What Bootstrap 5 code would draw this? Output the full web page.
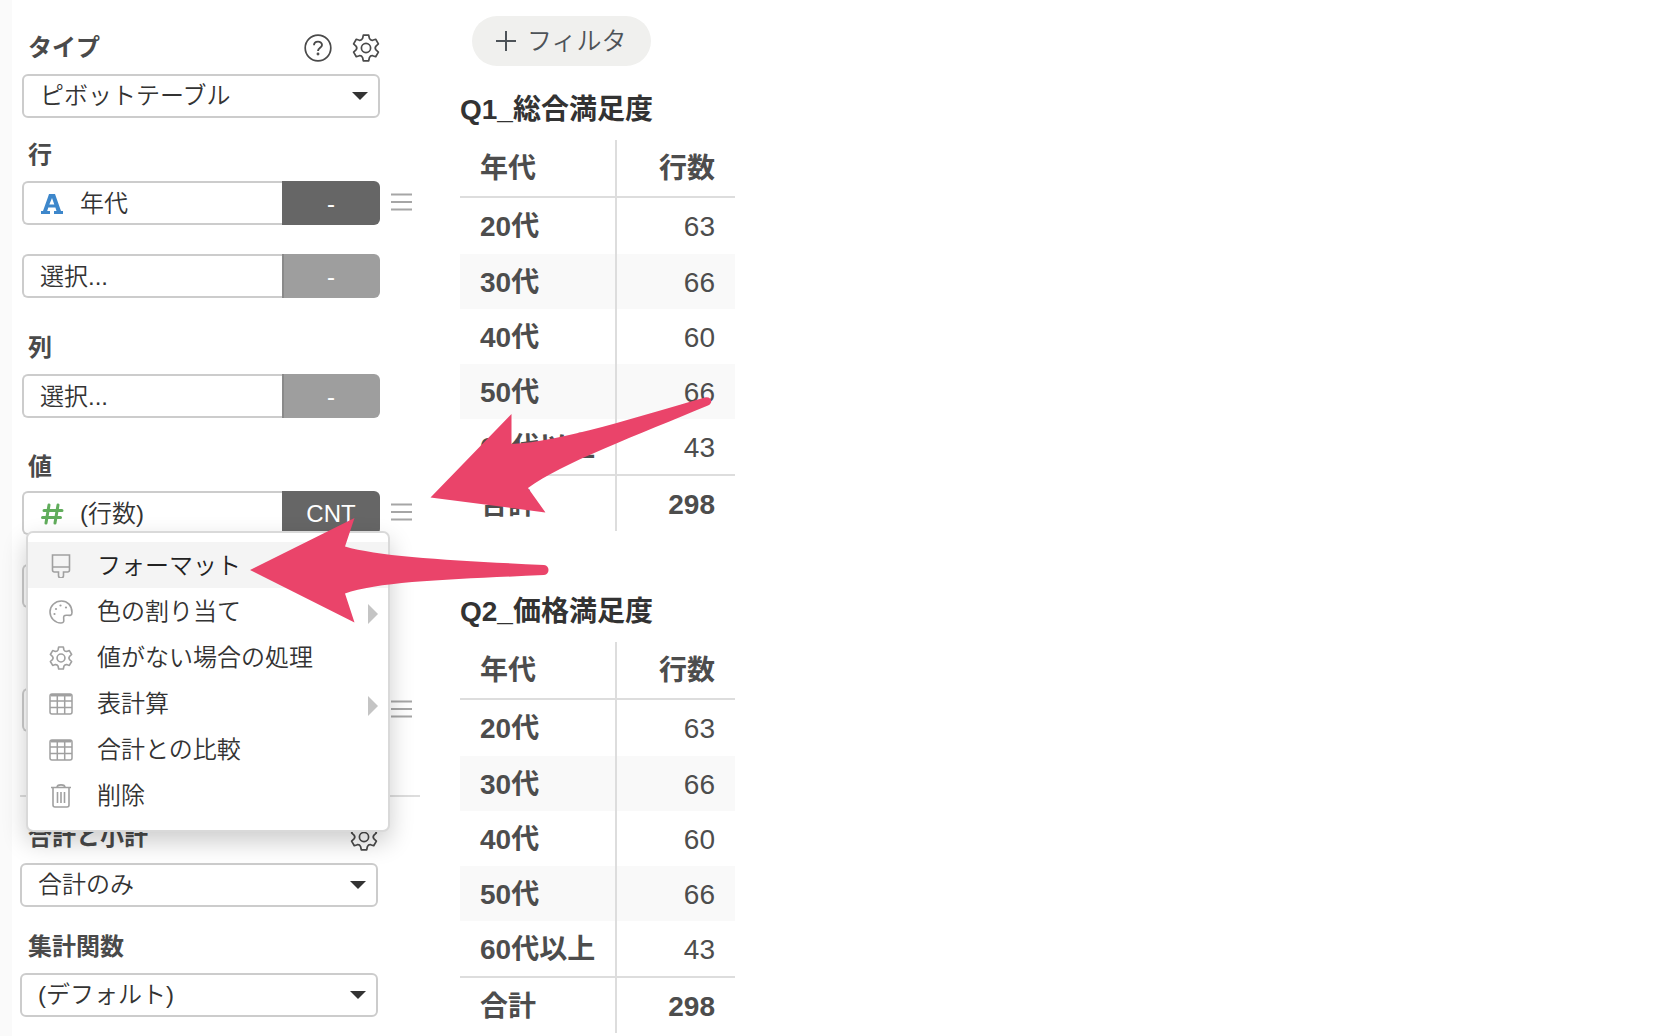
<!DOCTYPE html>
<html lang="ja">
<head>
<meta charset="utf-8">
<meta name="viewport" content="width=device-width, initial-scale=1">
<title>ピボットテーブル</title>
<link rel="stylesheet" href="https://cdn.jsdelivr.net/npm/bootstrap@5.3.0/dist/css/bootstrap.min.css">
<style>
body{font-family:"Liberation Sans","Noto Sans CJK JP",sans-serif;font-size:24px;line-height:36px;font-weight:350;color:#333;background:#fff;overflow-x:hidden}
.edge-strip{width:12px;background:#fafafa}
.side-panel{width:408px;padding:20px 0 16px 10px}
.upper-group{padding-right:40px}
.lower-group{margin-left:-2px;padding-right:42px}
.panel-head{height:54px;padding:1px 0 0 6px;color:#4a4a4a}
.lower-group .panel-head{padding-left:8px}
.head-low{height:50px;padding-top:2px}
.panel-head label,.panel-head h2{font-size:24px;line-height:36px;font-weight:700;margin:0}
.icon-btn{width:28px;height:28px;padding:0;border:0;background:none;color:#4a4a4a;display:flex}
.icon-btn+.icon-btn{margin-left:20px}
.pick{height:44px;border:2px solid #ccc;border-radius:6px;padding:0 16px;font-size:24px;line-height:38px;font-weight:350;color:#333;
 background-image:url("data:image/svg+xml,%3Csvg xmlns='http://www.w3.org/2000/svg' viewBox='0 0 16 8'%3E%3Cpath fill='%23333' d='M0 0h16L8 8z'/%3E%3C/svg%3E");background-size:16px 8px;background-position:right 10px center}
.field-row{height:44px}
.field-name{flex:1 1 0;min-width:0;border:2px solid #ccc;border-right:0;border-radius:6px 0 0 6px;background:#fff;padding:1px 16px 0;text-align:left;font-weight:350;color:#333;line-height:36px;display:flex;align-items:center}
.field-agg{width:98px;border:0;border-radius:0 6px 6px 0;background:#666;color:#fff;font-weight:350;padding:1px 0 0;line-height:36px}
.field-agg.idle{background:#9e9e9e;box-shadow:inset 2px 0 0 #8a8a8a}
.grip{position:absolute;left:100%;top:8px;margin-left:11px}
.type-mark{width:24px;height:24px;margin-right:16px}
.gap-row{margin-top:29px}
.far-row{margin-top:80px}
.head-rows{margin-top:9px}
.head-cols{margin-top:22px}
.head-low{margin-top:23px}
.head-func{margin-top:12px}
.ctx-menu{position:absolute;z-index:5;top:40px;left:4px;width:364px;min-height:301px;margin:0;padding:9px 0;list-style:none;background:#fff;border:2px solid #d9d9d9;border-radius:7px;box-shadow:0 10px 24px rgba(0,0,0,.2)}
.ctx-menu button{width:100%;height:46px;border:0;background:none;padding:1px 10px 0 21px;display:flex;align-items:center;gap:24px;text-align:left;font-weight:350;color:#333}
.ctx-menu button.hot{background:#f4f4f4;color:#222}
.ctx-menu svg{flex:none}
.ctx-menu .sub-arrow{margin-left:auto;margin-top:4px}
.sep{height:2px;background:#ddd;margin:63px 0 12px -2px}
.board{padding:16px 0 0 40px}
.filter-btn{height:50px;border:0;border-radius:25px;background:#f0f0ee;color:#4d5358;padding:0 24px;margin-left:12px;font-size:25px;font-weight:350;display:flex;align-items:center;gap:11px}
.pivot-title{font-size:28px;line-height:36px;font-weight:700;color:#333;height:62px;padding-top:14px;margin:0}
.first-title{margin-top:12px}
.pivot{width:275px;font-size:28px;line-height:36px;color:#4d4d4d;border-collapse:separate;border-spacing:0;white-space:nowrap}
.pivot th,.pivot td{height:55px;padding:2px 20px 0;vertical-align:middle}
.pivot th,.pivot tfoot td{font-weight:700}
.pivot td,.pivot thead th:last-child{text-align:right}
.pivot tr>:first-child{border-right:2px solid #ddd;width:157px}
.pivot tbody th{padding-right:0}
.pivot thead th{height:58px;border-bottom:2px solid #ddd}
.pivot tbody tr:first-child>*{height:56px}
.pivot tbody tr:nth-child(even)>*{background:#f9f9f9}
.pivot tfoot>tr>*{height:57px;border-top:2px solid #ddd}
.next-title{margin-top:49px}
.pointers{position:absolute;left:0;top:0;z-index:10;pointer-events:none}
</style>
<script src="https://cdn.jsdelivr.net/npm/bootstrap@5.3.0/dist/js/bootstrap.bundle.min.js"></script>
</head>
<body>
<svg class="d-none" xmlns="http://www.w3.org/2000/svg">
 <symbol id="gear" viewBox="0 0 28 28"><g fill="none" stroke="currentColor" stroke-linejoin="round"><circle cx="14" cy="14" r="4.600"/><path d="M10.600 4.400L11.300 1.200H16.700L17.400 4.400Q18.500 6.600 20.600 6.300L23.700 5.300L26.400 9.900L24 12.100Q22.400 14 24 15.900L26.400 18.100L23.700 22.700L20.600 21.700Q18.500 21.400 17.400 23.600L16.700 26.800H11.300L10.600 23.600Q9.500 21.400 7.400 21.700L4.300 22.700L1.600 18.100L4 15.900Q5.600 14 4 12.100L1.600 9.900L4.300 5.300L7.400 6.300Q9.500 6.600 10.600 4.400z"/></g></symbol>
 <symbol id="bars" viewBox="0 0 21 28"><path d="M0 5.500h21M0 13h21M0 20.500h21" stroke="#a6a6a6" stroke-width="2" fill="none"/></symbol>
 <symbol id="grid" viewBox="0 0 24 24"><g fill="none" stroke="#a0a0a0" stroke-width="1.500"><rect x="1" y="2" width="22" height="20" rx="2"/><path d="M1 9h22M1 15.500h22M8.300 3v19M15.700 3v19"/><path d="M2 3.200h20" stroke-width="2.500"/></g></symbol>
</svg>
<div class="position-relative d-flex min-vh-100">
 <div class="edge-strip flex-shrink-0"></div>
 <aside class="side-panel flex-shrink-0">
  <div class="upper-group">
   <div class="panel-head d-flex align-items-center"><label for="kind">タイプ</label>
    <button class="icon-btn ms-auto" type="button" aria-label="ヘルプ"><svg width="28" height="28" viewBox="0 0 28 28" fill="none" stroke="currentColor" stroke-width="1.700"><circle cx="14" cy="14" r="12.800"/><path d="M10 11.300C10 6.400 18 6.500 18 11c0 2.900-4 2.800-4 6" stroke-width="1.900"/><circle cx="14" cy="20" r=".6"/></svg></button>
    <button class="icon-btn" type="button" aria-label="設定"><svg width="28" height="28" stroke-width="1.700"><use href="#gear"/></svg></button>
   </div>
   <select id="kind" class="form-select pick"><option>ピボットテーブル</option></select>

   <div class="panel-head head-rows d-flex align-items-center"><h2>行</h2></div>
   <div class="field-row d-flex position-relative"><button class="field-name" type="button"><svg class="type-mark" viewBox="0 0 24 24"><path fill="#3d87cb" d="M9 2h6l6 17h2v3h-9v-3h2.500l-1.100-3.500H8.300L7.200 19H10v3H1v-3h2L8 5zM12 6l-2.700 6.500h5z" fill-rule="evenodd"/></svg>年代</button><button class="field-agg" type="button">-</button><svg class="grip" width="21" height="28"><use href="#bars"/></svg></div>
   <div class="field-row gap-row d-flex"><button class="field-name" type="button">選択...</button><button class="field-agg idle" type="button">-</button></div>

   <div class="panel-head head-cols d-flex align-items-center"><h2>列</h2></div>
   <div class="field-row d-flex"><button class="field-name" type="button">選択...</button><button class="field-agg idle" type="button">-</button></div>

   <div class="panel-head head-low d-flex align-items-center"><h2>値</h2></div>
   <div class="field-row d-flex position-relative"><button class="field-name" type="button"><svg class="type-mark" viewBox="0 0 24 24"><path fill="none" stroke="#61ad5c" stroke-width="3" stroke-linecap="round" d="M9 3L6 21M18 3l-3 18M4 8.500h18M2.500 15.500h18"/></svg>(行数)</button><button class="field-agg" type="button">CNT</button><svg class="grip" width="21" height="28"><use href="#bars"/></svg>
    <ul class="ctx-menu">
     <li><button class="hot" type="button"><svg width="24" height="24" viewBox="0 0 24 24" fill="none" stroke="#a0a0a0" stroke-width="1.600"><path d="M3.500 1h17v15a2 2 0 0 1-2 2h-4v3.500a2.500 2.500 0 0 1-5 0V18h-4a2 2 0 0 1-2-2zM3.500 13h17"/></svg>フォーマット</button></li>
     <li><button type="button"><svg width="24" height="24" viewBox="0 0 24 24" fill="none" stroke="#a0a0a0" stroke-width="1.600"><path d="M12.500 1C6 1 1 6 1 12s5 11 11 11c5 0 1.500-5 3-7 1.800-2.500 8 2 8-3.500C23 5.500 18.500 1 12.500 1z"/><g fill="#a0a0a0" stroke="none"><circle cx="11.500" cy="5.500" r="1.100"/><circle cx="7" cy="9" r="1.100"/><circle cx="17" cy="7.500" r="1.100"/><circle cx="5.500" cy="14" r="1.100"/></g></svg>色の割り当て<svg class="sub-arrow" width="10" height="20" viewBox="0 0 10 20"><path fill="#c4c4c4" d="M0 0l10 10L0 20z"/></svg></button></li>
     <li><button type="button"><svg width="24" height="24" color="#a0a0a0" stroke-width="1.900"><use href="#gear"/></svg>値がない場合の処理</button></li>
     <li><button type="button"><svg width="24" height="24"><use href="#grid"/></svg>表計算<svg class="sub-arrow" width="10" height="20" viewBox="0 0 10 20"><path fill="#c4c4c4" d="M0 0l10 10L0 20z"/></svg></button></li>
     <li><button type="button"><svg width="24" height="24"><use href="#grid"/></svg>合計との比較</button></li>
     <li><button type="button"><svg width="24" height="24" viewBox="0 0 24 24" fill="none" stroke="#a0a0a0" stroke-width="1.600"><path d="M2 3.500h20M8 3.500C8 0 16 0 16 3.500M4 3.500V21a2 2 0 0 0 2 2h12a2 2 0 0 0 2-2V3.500M8.500 8v11M12 8v11M15.500 8v11"/></svg>削除</button></li>
    </ul>
   </div>
   <div class="field-row gap-row d-flex"><button class="field-name" type="button" aria-label="選択"></button><button class="field-agg idle" type="button" aria-label="集計"></button></div>
   <div class="field-row far-row d-flex position-relative"><button class="field-name" type="button" aria-label="選択"></button><button class="field-agg" type="button" aria-label="集計"></button><svg class="grip" width="21" height="28"><use href="#bars"/></svg></div>
  </div>
  <div class="sep"></div>
  <div class="lower-group">
   <div class="panel-head d-flex align-items-center"><label for="totals">合計と小計</label><button class="icon-btn ms-auto" type="button" aria-label="設定"><svg width="28" height="28" stroke-width="1.700"><use href="#gear"/></svg></button></div>
   <select id="totals" class="form-select pick"><option>合計のみ</option></select>
   <div class="panel-head head-func d-flex align-items-center"><label for="func">集計関数</label></div>
   <select id="func" class="form-select pick"><option>(デフォルト)</option></select>
  </div>
 </aside>
 <main class="board flex-grow-1">
  <button class="filter-btn" type="button"><svg width="20" height="20" viewBox="0 0 20 20"><path d="M10 0v20M0 10h20" stroke="#4d5358" stroke-width="2"/></svg>フィルタ</button>
  <h3 class="pivot-title first-title">Q1_総合満足度</h3>
  <table class="pivot">
   <thead><tr><th>年代</th><th>行数</th></tr></thead>
   <tbody>
    <tr><th>20代</th><td>63</td></tr><tr><th>30代</th><td>66</td></tr><tr><th>40代</th><td>60</td></tr><tr><th>50代</th><td>66</td></tr><tr><th>60代以上</th><td>43</td></tr>
   </tbody>
   <tfoot><tr><th>合計</th><td>298</td></tr></tfoot>
  </table>
  <h3 class="pivot-title next-title">Q2_価格満足度</h3>
  <table class="pivot">
   <thead><tr><th>年代</th><th>行数</th></tr></thead>
   <tbody>
    <tr><th>20代</th><td>63</td></tr><tr><th>30代</th><td>66</td></tr><tr><th>40代</th><td>60</td></tr><tr><th>50代</th><td>66</td></tr><tr><th>60代以上</th><td>43</td></tr>
   </tbody>
   <tfoot><tr><th>合計</th><td>298</td></tr></tfoot>
  </table>
 </main>
 <svg class="pointers" width="760" height="640" viewBox="0 0 760 640" fill="#ea446a"><path d="M430.500 497.500L511.500 414v30C560 442 640 416 705 397.500c6-1.500 9 5 3 8C640 434 560 464 528 488l17.500 24.500z"/><path d="M250 570l104.500-52-9.500 28.500C380 557 460 561 544 565c6 .5 6 9.500 0 10-84 4-164 6-199 18.500l9.500 29z"/></svg>
</div>
</body>
</html>
